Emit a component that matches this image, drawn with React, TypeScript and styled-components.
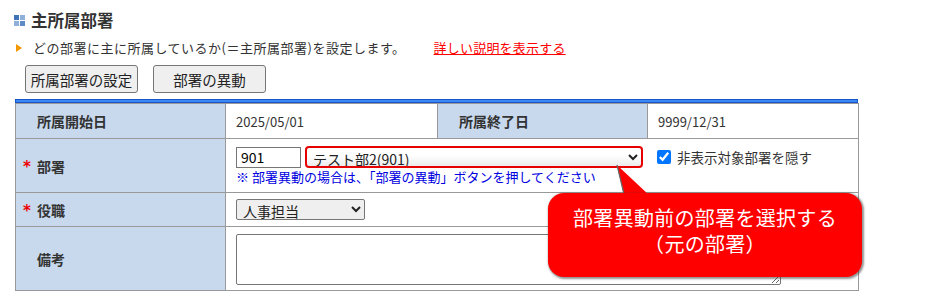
import { createGlobalStyle, styled } from "styled-components";

const GlobalStyle = createGlobalStyle`
  body {
    margin: 0;
    background: #fff;
    font-family: "Noto Sans CJK JP", "Noto Sans", sans-serif;
    color: #333;
  }
`;

const Page = styled.div`
  position: relative;
  width: 932px;
  height: 298px;
  padding: 10px 0 0 15px;
  box-sizing: border-box;
  overflow: hidden;
`;

const TitleRow = styled.div`
  display: flex;
  align-items: center;
  gap: 6px;
  height: 20px;
`;

const TitleIcon = styled.div`
  display: grid;
  grid-template-columns: 5px 5px;
  grid-template-rows: 5px 5px;
  gap: 1px;
  margin-left: -1px;
`;

const IconCell = styled.span<{ $shade: string }>`
  background: ${(p) => p.$shade};
`;

const Title = styled.h2`
  margin: 0;
  font-size: 16.5px;
  font-weight: 700;
  line-height: 20px;
  color: #333;
`;

const DescRow = styled.div`
  display: flex;
  align-items: center;
  margin-top: 8px;
  height: 20px;
  font-size: 13px;
  line-height: 20px;
  letter-spacing: 0.5px;
`;

const Arrow = styled.span`
  width: 0;
  height: 0;
  border-top: 4px solid transparent;
  border-bottom: 4px solid transparent;
  border-left: 6px solid #f39800;
  margin: 0 11px 0 1px;
`;

const HelpLink = styled.a`
  margin-left: 28px;
  color: #f00;
  text-decoration: underline;
  letter-spacing: 0.2px;
  cursor: pointer;
`;

const ButtonRow = styled.div`
  display: flex;
  gap: 15px;
  margin: 7px 0 0 10px;
`;

const ActionButton = styled.button`
  width: 113px;
  height: 28px;
  padding: 0;
  background: #efefef;
  border: 1px solid #767676;
  border-radius: 3px;
  font-family: inherit;
  font-size: 14.5px;
  color: #222;
`;

const BlueBar = styled.div`
  width: 841px;
  height: 2px;
  margin-top: 6px;
  background: #3d86f5;
  border: 1px solid #1556c8;
`;

const Table = styled.table`
  width: 843px;
  border-collapse: collapse;
  table-layout: fixed;
  font-size: 13px;
`;

const Row = styled.tr<{ $h: number }>`
  height: ${(p) => p.$h}px;
`;

const LabelCell = styled.th`
  background: #c8d9ee;
  border: 1px solid #999;
  text-align: left;
  padding: 0 0 0 21px;
  font-size: 14px;
  font-weight: 700;
  color: #333;
`;

const ValueCell = styled.td`
  border: 1px solid #999;
  padding: 0 0 0 10px;
  color: #333;
  vertical-align: middle;
`;

const Required = styled.span`
  display: inline-block;
  width: 14px;
  margin-left: -14px;
  color: #e00;
  font-family: "DejaVu Sans", sans-serif;
  font-size: 15px;
  font-weight: 700;
`;

const DeptLine = styled.div`
  display: flex;
  align-items: center;
`;

const CodeInput = styled.input`
  width: 65px;
  height: 21px;
  box-sizing: border-box;
  border: 1px solid #767676;
  font-family: inherit;
  font-size: 14px;
  padding: 0 4px;
  margin: 0;
`;

const DeptSelect = styled.select`
  width: 338px;
  height: 22px;
  margin-left: 4px;
  box-sizing: border-box;
  border: 2px solid #e60000;
  border-radius: 4px;
  background: linear-gradient(#fff 40%, #ececec);
  font-family: inherit;
  font-size: 14px;
  color: #222;
  padding: 0 2px;
`;

const HideCheck = styled.label`
  display: flex;
  align-items: center;
  margin-left: 14px;
  font-size: 13.5px;
  color: #333;
  input {
    width: 14px;
    height: 14px;
    margin: 0 6px 0 0;
  }
`;

const Note = styled.div`
  margin-top: 1px;
  color: #0000e0;
  font-size: 13px;
  line-height: 16px;
`;

const RoleSelect = styled.select`
  width: 129px;
  height: 21px;
  box-sizing: border-box;
  border: 1px solid #767676;
  border-radius: 2px;
  font-family: inherit;
  font-size: 14px;
  color: #222;
  padding: 0 2px;
`;

const Memo = styled.textarea`
  display: block;
  width: 545px;
  height: 51px;
  box-sizing: border-box;
  border: 1px solid #767676;
  border-radius: 2px;
  margin: 2px 0 0;
  resize: both;
`;

const Callout = styled.div`
  position: absolute;
  left: 548px;
  top: 193px;
  width: 314px;
  height: 84px;
  box-sizing: border-box;
  background: #ff0000;
  border-radius: 16px;
  box-shadow: 1px 1px 2px 1px rgba(60, 60, 60, 0.55);
  color: #fff;
  font-size: 20px;
  line-height: 26px;
  text-align: center;
  padding-top: 12px;
  letter-spacing: 0.3px;
`;

const Tail = styled.svg`
  position: absolute;
  left: 610px;
  top: 160px;
`;

export default function App() {
  return (
    <>
      <GlobalStyle />
      <Page>
        <TitleRow>
          <TitleIcon>
            <IconCell $shade="#3f74b8" />
            <IconCell $shade="#8fb0da" />
            <IconCell $shade="#8fb0da" />
            <IconCell $shade="#5f8cc8" />
          </TitleIcon>
          <Title>主所属部署</Title>
        </TitleRow>
        <DescRow>
          <Arrow />
          どの部署に主に所属しているか(＝主所属部署)を設定します。
          <HelpLink>詳しい説明を表示する</HelpLink>
        </DescRow>
        <ButtonRow>
          <ActionButton>所属部署の設定</ActionButton>
          <ActionButton>部署の異動</ActionButton>
        </ButtonRow>
        <BlueBar />
        <Table>
          <colgroup>
            <col style={{ width: 210 }} />
            <col style={{ width: 212 }} />
            <col style={{ width: 210 }} />
            <col style={{ width: 211 }} />
          </colgroup>
          <tbody>
            <Row $h={35}>
              <LabelCell>所属開始日</LabelCell>
              <ValueCell>2025/05/01</ValueCell>
              <LabelCell>所属終了日</LabelCell>
              <ValueCell>9999/12/31</ValueCell>
            </Row>
            <Row $h={54}>
              <LabelCell>
                <Required>*</Required>部署
              </LabelCell>
              <ValueCell colSpan={3}>
                <DeptLine>
                  <CodeInput defaultValue="901" />
                  <DeptSelect defaultValue="901">
                    <option value="901">テスト部2(901)</option>
                  </DeptSelect>
                  <HideCheck>
                    <input type="checkbox" defaultChecked />
                    非表示対象部署を隠す
                  </HideCheck>
                </DeptLine>
                <Note>※ 部署異動の場合は、「部署の異動」ボタンを押してください</Note>
              </ValueCell>
            </Row>
            <Row $h={34}>
              <LabelCell>
                <Required>*</Required>役職
              </LabelCell>
              <ValueCell colSpan={3}>
                <RoleSelect defaultValue="hr">
                  <option value="hr">人事担当</option>
                </RoleSelect>
              </ValueCell>
            </Row>
            <Row $h={64}>
              <LabelCell>備考</LabelCell>
              <ValueCell colSpan={3}>
                <Memo />
              </ValueCell>
            </Row>
          </tbody>
        </Table>
        <Tail width="50" height="40" viewBox="0 0 50 40">
          <polygon points="7,5 14,36 40,36" fill="#ff0000" />
          <line x1="7" y1="5" x2="14" y2="34" stroke="#666" strokeWidth="1.2" />
        </Tail>
        <Callout>
          部署異動前の部署を選択する
          <br />
          （元の部署）
        </Callout>
      </Page>
    </>
  );
}
